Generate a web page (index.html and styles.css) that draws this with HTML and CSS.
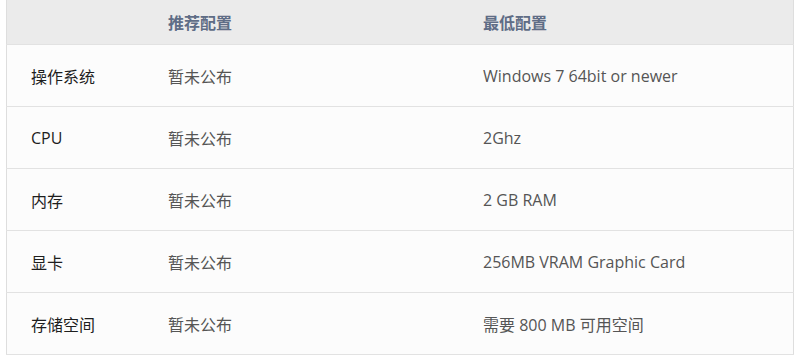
FILE: index.html
```html
<!DOCTYPE html>
<html lang="zh-CN">
<head>
    <meta charset="UTF-8">
    <meta name="viewport" content="width=device-width, initial-scale=1.0">
    <title>配置需求</title>
    <link rel="stylesheet" href="styles.css">
</head>
<body>
    <table class="spec-table">
        <thead>
            <tr>
                <th class="col-name"></th>
                <th class="col-rec">推荐配置</th>
                <th>最低配置</th>
            </tr>
        </thead>
        <tbody>
            <tr>
                <td class="col-name">操作系统</td>
                <td>暂未公布</td>
                <td>Windows 7 64bit or newer</td>
            </tr>
            <tr>
                <td class="col-name">CPU</td>
                <td>暂未公布</td>
                <td>2Ghz</td>
            </tr>
            <tr>
                <td class="col-name">内存</td>
                <td>暂未公布</td>
                <td>2 GB RAM</td>
            </tr>
            <tr>
                <td class="col-name">显卡</td>
                <td>暂未公布</td>
                <td>256MB VRAM Graphic Card</td>
            </tr>
            <tr>
                <td class="col-name">存储空间</td>
                <td>暂未公布</td>
                <td>需要 800 MB 可用空间</td>
            </tr>
        </tbody>
    </table>
</body>
</html>
```

FILE: styles.css
```css
body {
    margin: 0;
    padding: 0 6px;
    background: #fff;
    font-family: "Open Sans", "Noto Sans CJK SC", sans-serif;
}

.spec-table {
    width: 788px;
    border-collapse: collapse;
    border: 1px solid #dedede;
    border-top: none;
    background: #fcfcfc;
    table-layout: fixed;
}

.spec-table th,
.spec-table td {
    text-align: left;
    padding: 0 0 0 24px;
    border-bottom: 1px solid #e2e2e2;
}

.spec-table th {
    height: 44px;
    background: #ebebeb;
    color: #5f6d86;
    font-size: 16px;
    font-weight: bold;
    vertical-align: middle;
}

.spec-table td {
    height: 61px;
    color: #555;
    font-size: 16px;
}

.spec-table .col-name {
    width: 113px;
}

.spec-table .col-rec {
    width: 291px;
}

.spec-table td.col-name {
    color: #1e1e1e;
}
```
